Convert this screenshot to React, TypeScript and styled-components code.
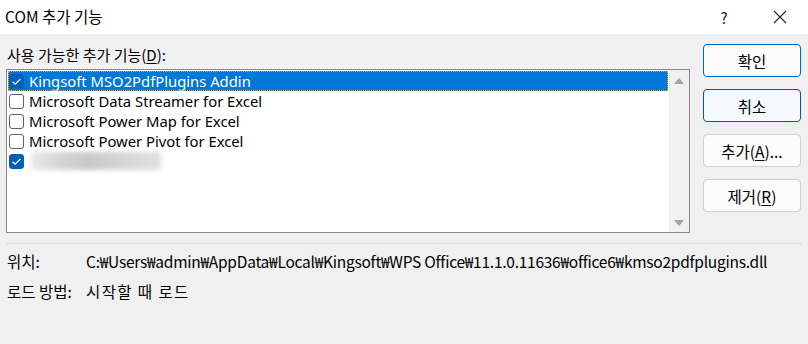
import React from 'react'
import styled, { createGlobalStyle } from 'styled-components'

const GlobalStyle = createGlobalStyle`
  html, body {
    margin: 0;
    padding: 0;
    background: #f0f0f0;
  }
  body {
    font-family: "Noto Sans", "Noto Sans CJK KR", sans-serif;
    color: #000;
  }
`

const Dialog = styled.div`
  width: 808px;
  height: 344px;
  background: #f0f0f0;
  display: flex;
  flex-direction: column;
  overflow: hidden;
`

const TitleBar = styled.div`
  height: 34px;
  background: #fff;
  display: flex;
  align-items: center;
  padding-left: 5px;
  font-family: "Noto Sans CJK KR", sans-serif;
  font-size: 15.5px;
`

const TitleText = styled.div`
  flex: 1;
  margin-top: -2px;
`

const TitleButton = styled.div`
  width: 56px;
  height: 34px;
  display: flex;
  align-items: center;
  justify-content: center;
  font-size: 15px;
  color: #222;
`

const Body = styled.div`
  display: flex;
  padding: 10px 7px 0 6px;
  gap: 13px;
`

const LeftCol = styled.div`
  flex: 1;
  display: flex;
  flex-direction: column;
`

const Label = styled.div`
  font-family: "Noto Sans CJK KR", sans-serif;
  font-size: 15px;
  height: 25px;
  line-height: 21px;
  padding-left: 1px;
  u {
    text-decoration: underline;
    text-underline-offset: 2px;
  }
`

const ListBox = styled.div`
  height: 164px;
  border: 1px solid #828790;
  background: #fff;
  display: flex;
  box-sizing: border-box;
`

const Items = styled.div`
  flex: 1;
  padding: 1px 1px 0 1px;
`

const Row = styled.div<{ $selected?: boolean }>`
  height: 20px;
  display: flex;
  align-items: center;
  gap: 5px;
  padding-left: 1px;
  box-sizing: border-box;
  font-size: 14.8px;
  background: ${p => (p.$selected ? '#0078d7' : 'transparent')};
  color: ${p => (p.$selected ? '#fff' : '#000')};
  outline: ${p => (p.$selected ? '1px dotted #ff9a2e' : 'none')};
  outline-offset: -1px;
`

const Box = styled.div<{ $checked?: boolean }>`
  width: 15px;
  height: 15px;
  box-sizing: border-box;
  border-radius: 3px;
  border: 1px solid ${p => (p.$checked ? '#005fb8' : '#5f5f5f')};
  background: ${p => (p.$checked ? '#005fb8' : '#fff')};
  display: flex;
  align-items: center;
  justify-content: center;
  flex-shrink: 0;
`

const Blur = styled.div`
  width: 130px;
  height: 18px;
  margin-left: 2px;
  background: linear-gradient(90deg, #e6e6e6 0%, #c8c8c8 25%, #bdbdbd 45%, #cccccc 70%, #dadada 100%);
  filter: blur(2px);
  opacity: 0.8;
`

const ScrollBar = styled.div`
  width: 20px;
  background: #f0f0f0;
  display: flex;
  flex-direction: column;
  justify-content: space-between;
  align-items: center;
  padding: 8px 0 6px;
`

const Arrow = styled.div<{ $down?: boolean }>`
  width: 0;
  height: 0;
  border-left: 5px solid transparent;
  border-right: 5px solid transparent;
  ${p =>
    p.$down
      ? 'border-top: 6px solid #a3a3a3;'
      : 'border-bottom: 6px solid #a3a3a3;'}
`

const Buttons = styled.div`
  width: 98px;
  display: flex;
  flex-direction: column;
  gap: 12px;
`

const Button = styled.div<{ $variant?: 'default' | 'focus' | 'plain' }>`
  height: 33px;
  box-sizing: border-box;
  border-radius: 4px;
  display: flex;
  align-items: center;
  justify-content: center;
  font-family: "Noto Sans CJK KR", sans-serif;
  font-size: 15.5px;
  border: 1px solid
    ${p =>
      p.$variant === 'default'
        ? '#0067c0'
        : p.$variant === 'focus'
        ? '#005a9e'
        : '#d0d0d0'};
  background: ${p => (p.$variant === 'focus' ? '#f5f9fd' : '#fbfbfb')};
  u {
    text-decoration: underline;
    text-underline-offset: 2px;
  }
`

const Divider = styled.div`
  height: 1px;
  background: #dadada;
  margin: 10px 6px 0 6px;
`

const Info = styled.div`
  padding: 6px 0 0 7px;
  display: grid;
  grid-template-columns: 79px 1fr;
  row-gap: 8px;
  font-family: "Noto Sans CJK KR", sans-serif;
  font-size: 15.5px;
  line-height: 22px;
`

const PathText = styled.div`
  letter-spacing: -0.25px;
`

const LoadText = styled.div`
  letter-spacing: 1.4px;
`

const Check = () => (
  <svg width="11" height="9" viewBox="0 0 11 9">
    <path d="M1.5 4.8 L4.2 7.2 L9.5 1.8" fill="none" stroke="#fff" strokeWidth="1.2" />
  </svg>
)

const items = [
  { name: 'Kingsoft MSO2PdfPlugins Addin', checked: true, selected: true },
  { name: 'Microsoft Data Streamer for Excel', checked: false },
  { name: 'Microsoft Power Map for Excel', checked: false },
  { name: 'Microsoft Power Pivot for Excel', checked: false },
  { name: '', checked: true, blurred: true },
]

export default function App() {
  return (
    <Dialog>
      <GlobalStyle />
      <TitleBar>
        <TitleText>COM 추가 기능</TitleText>
        <TitleButton>?</TitleButton>
        <TitleButton>
          <svg width="14" height="14" viewBox="0 0 14 14">
            <path d="M1 1 L13 13 M13 1 L1 13" stroke="#222" strokeWidth="1.1" />
          </svg>
        </TitleButton>
      </TitleBar>
      <Body>
        <LeftCol>
          <Label>
            사용 가능한 추가 기능(<u>D</u>):
          </Label>
          <ListBox>
            <Items>
              {items.map((it, i) => (
                <Row key={i} $selected={it.selected}>
                  <Box $checked={it.checked}>{it.checked && <Check />}</Box>
                  {it.blurred ? <Blur /> : <span>{it.name}</span>}
                </Row>
              ))}
            </Items>
            <ScrollBar>
              <Arrow />
              <Arrow $down />
            </ScrollBar>
          </ListBox>
        </LeftCol>
        <Buttons>
          <Button $variant="default">확인</Button>
          <Button $variant="focus">취소</Button>
          <Button $variant="plain">
            추가(<u>A</u>)...
          </Button>
          <Button $variant="plain">
            제거(<u>R</u>)
          </Button>
        </Buttons>
      </Body>
      <Divider />
      <Info>
        <div>위치:</div>
        <PathText>
          C:₩Users₩admin₩AppData₩Local₩Kingsoft₩WPS Office₩11.1.0.11636₩office6₩kmso2pdfplugins.dll
        </PathText>
        <div>로드 방법:</div>
        <LoadText>시작할 때 로드</LoadText>
      </Info>
    </Dialog>
  )
}
